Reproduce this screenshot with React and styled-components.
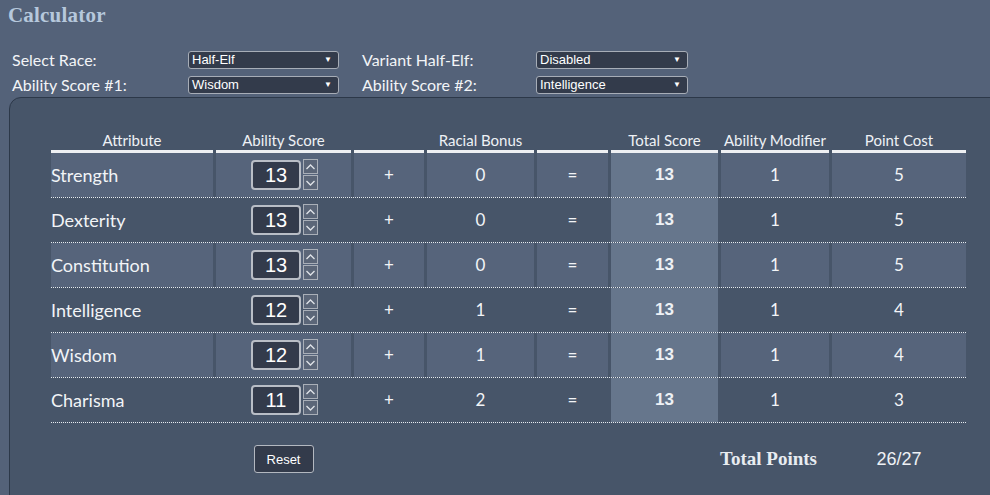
import React, { useState } from "react";
import styled, { createGlobalStyle } from "styled-components";

const GlobalStyle = createGlobalStyle`
  html, body {
    margin: 0;
    padding: 0;
    background: #546279;
    overflow: hidden;
  }
  body {
    font-family: Lato, "Liberation Sans", sans-serif;
    color: #f2f4f7;
  }
`;

const COLS = "162px 135px 70px 107px 71px 107px 108px 134px";

const Page = styled.div`
  width: 990px;
  height: 495px;
  overflow: hidden;
`;

const Title = styled.h1`
  margin: 0;
  padding: 3px 0 0 8px;
  height: 28px;
  font-family: "Liberation Serif", serif;
  font-weight: bold;
  font-size: 21px;
  color: #b6c8dc;
  letter-spacing: 0.2px;
`;

const Form = styled.div`
  display: grid;
  grid-template-columns: 176px 174px 174px 152px;
  row-gap: 7px;
  padding: 20px 0 0 12px;
`;

const Label = styled.label`
  font-size: 16px;
  line-height: 18px;
  color: #f2f4f7;
`;

const SelectBox = styled.div`
  position: relative;
  width: ${(p) => p.w}px;
  height: 18px;
  box-sizing: border-box;
  border: 1px solid #a7adb7;
  border-radius: 3px;
  background: #333b4b;
  font-family: "Liberation Sans", Arial, sans-serif;
  font-size: 13px;
  line-height: 16px;
  padding-left: 3px;
  color: #fff;
`;

const Arrow = styled.span`
  position: absolute;
  right: 6px;
  top: 0;
  font-size: 8px;
  line-height: 16px;
  color: #fff;
`;

const Panel = styled.div`
  margin: 3px -30px 0 9px;
  height: 420px;
  border: 1px solid #2c3849;
  border-radius: 12px 0 0 0;
  background: #475569;
  padding: 32px 0 0 41px;
  box-sizing: border-box;
`;

const Row = styled.div`
  display: grid;
  grid-template-columns: ${COLS};
  column-gap: 3px;
  width: 915px;
  border-bottom: ${(p) => (p.head ? "none" : "1px dotted #e8ecf1")};
`;

const Th = styled.div`
  height: 20px;
  border-bottom: 3px solid #eef0f3;
  font-size: 15px;
  line-height: 20px;
  text-align: center;
  color: #eef1f5;
  white-space: nowrap;
`;

const Td = styled.div`
  height: 44px;
  display: flex;
  align-items: center;
  justify-content: ${(p) => (p.left ? "flex-start" : "center")};
  background: ${(p) => (p.total ? "#66768c" : p.odd ? "#56647b" : "transparent")};
  font-size: ${(p) => (p.left ? 18 : 17)}px;
  padding-bottom: 1px;
  box-sizing: border-box;
  color: #f2f4f7;
`;

const TotalValue = styled.span`
  font-family: "Liberation Sans", Arial, sans-serif;
  font-weight: bold;
  font-size: 17px;
  color: #eef1f5;
`;

const Spinner = styled.div`
  display: flex;
  align-items: center;
  gap: 2px;
  margin-left: 2px;
`;

const NumBox = styled.div`
  width: 50px;
  height: 30px;
  box-sizing: border-box;
  border: 2px solid #b9bec6;
  border-radius: 4px;
  background: #333b4b;
  font-family: "Liberation Sans", Arial, sans-serif;
  font-size: 20px;
  line-height: 26px;
  text-align: center;
  color: #fff;
`;

const StepCol = styled.div`
  display: flex;
  flex-direction: column;
  gap: 1px;
`;

const StepBtn = styled.button`
  width: 15px;
  height: 15px;
  padding: 0;
  box-sizing: border-box;
  border: 1px solid #a9afb8;
  background: #5b6678;
  display: flex;
  align-items: center;
  justify-content: center;
  cursor: pointer;
`;

const Footer = styled.div`
  display: grid;
  grid-template-columns: ${COLS};
  column-gap: 3px;
  width: 915px;
  margin-top: 22px;
  align-items: center;
`;

const Cell = styled.div`
  display: flex;
  justify-content: center;
`;

const ResetButton = styled.button`
  width: 60px;
  height: 28px;
  border: 1px solid #b3b8c0;
  border-radius: 3px;
  background: #333b4b;
  color: #fff;
  font-family: "Liberation Sans", Arial, sans-serif;
  font-size: 13px;
  cursor: pointer;
`;

const TotalLabel = styled.div`
  font-family: "Liberation Serif", serif;
  font-weight: bold;
  font-size: 19px;
  color: #e8ecf1;
  margin-left: -13px;
  white-space: nowrap;
`;

const TotalNum = styled.div`
  font-family: "Liberation Sans", Arial, sans-serif;
  font-size: 18px;
  color: #eef1f5;
`;

const Chevron = ({ up }) => (
  <svg width="11" height="8" viewBox="0 0 11 8">
    <path
      d={up ? "M1.5 6 L5.5 2 L9.5 6" : "M1.5 2 L5.5 6 L9.5 2"}
      fill="none"
      stroke="#dfe3e8"
      strokeWidth="1.3"
    />
  </svg>
);

const COST = { 8: 0, 9: 1, 10: 2, 11: 3, 12: 4, 13: 5, 14: 7, 15: 9 };

const initial = [
  { name: "Strength", score: 13, bonus: 0 },
  { name: "Dexterity", score: 13, bonus: 0 },
  { name: "Constitution", score: 13, bonus: 0 },
  { name: "Intelligence", score: 12, bonus: 1 },
  { name: "Wisdom", score: 12, bonus: 1 },
  { name: "Charisma", score: 11, bonus: 2 },
];

const headers = [
  "Attribute",
  "Ability Score",
  "",
  "Racial Bonus",
  "",
  "Total Score",
  "Ability Modifier",
  "Point Cost",
];

export default function App() {
  const [attrs, setAttrs] = useState(initial);

  const step = (i, d) => {
    setAttrs((a) =>
      a.map((x, j) =>
        j === i ? { ...x, score: Math.min(15, Math.max(8, x.score + d)) } : x
      )
    );
  };

  const spent = attrs.reduce((s, a) => s + COST[a.score], 0);

  return (
    <Page>
      <GlobalStyle />
      <Title>Calculator</Title>
      <Form>
        <Label>Select Race:</Label>
        <SelectBox w={151}>
          Half-Elf<Arrow>▼</Arrow>
        </SelectBox>
        <Label>Variant Half-Elf:</Label>
        <SelectBox w={152}>
          Disabled<Arrow>▼</Arrow>
        </SelectBox>
        <Label>Ability Score #1:</Label>
        <SelectBox w={151}>
          Wisdom<Arrow>▼</Arrow>
        </SelectBox>
        <Label>Ability Score #2:</Label>
        <SelectBox w={152}>
          Intelligence<Arrow>▼</Arrow>
        </SelectBox>
      </Form>

      <Panel>
        <Row head>
          {headers.map((h, i) => (
            <Th key={i}>{h}</Th>
          ))}
        </Row>
        {attrs.map((a, i) => {
          const odd = i % 2 === 0;
          const total = a.score + a.bonus;
          const mod = Math.floor((total - 10) / 2);
          return (
            <Row key={a.name}>
              <Td left odd={odd}>{a.name}</Td>
              <Td odd={odd}>
                <Spinner>
                  <NumBox>{a.score}</NumBox>
                  <StepCol>
                    <StepBtn onClick={() => step(i, 1)}>
                      <Chevron up />
                    </StepBtn>
                    <StepBtn onClick={() => step(i, -1)}>
                      <Chevron />
                    </StepBtn>
                  </StepCol>
                </Spinner>
              </Td>
              <Td odd={odd}>+</Td>
              <Td odd={odd}>{a.bonus}</Td>
              <Td odd={odd}>=</Td>
              <Td total>
                <TotalValue>{total}</TotalValue>
              </Td>
              <Td odd={odd}>{mod}</Td>
              <Td odd={odd}>{COST[a.score]}</Td>
            </Row>
          );
        })}
        <Footer>
          <div />
          <Cell>
            <ResetButton onClick={() => setAttrs(initial)}>Reset</ResetButton>
          </Cell>
          <div />
          <div />
          <div />
          <div />
          <Cell>
            <TotalLabel>Total Points</TotalLabel>
          </Cell>
          <Cell>
            <TotalNum>{spent}/27</TotalNum>
          </Cell>
        </Footer>
      </Panel>
    </Page>
  );
}
